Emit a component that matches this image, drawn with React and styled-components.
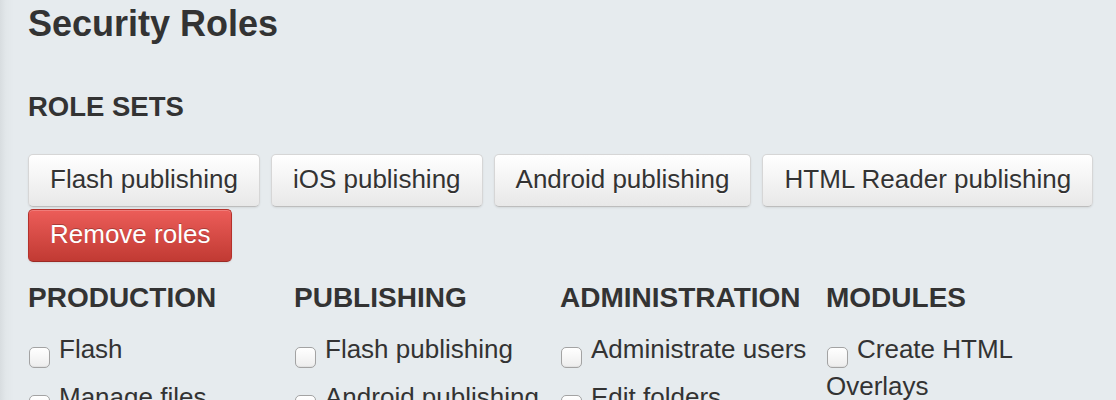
import React from 'react'
import styled, { createGlobalStyle } from 'styled-components'

const GlobalStyle = createGlobalStyle`
	html, body {
		margin: 0;
		padding: 0;
	}
	body {
		background: linear-gradient(to right, #d8dde0 0, #e2e7ea 6px, #e6ebee 14px, #e6ebee 100%);
		color: #333;
		font-family: 'Liberation Sans', Arial, Helvetica, sans-serif;
		min-height: 400px;
	}
`

const Page = styled.div`
	padding: 4px 4px 40px 28px;
`

const Title = styled.h1`
	margin: 0;
	font-size: 36px;
	line-height: 40px;
	font-weight: bold;
	color: #333;
`

const SectionTitle = styled.h3`
	margin: 48px 0 0;
	font-size: 27.5px;
	line-height: 30px;
	font-weight: bold;
	text-transform: uppercase;
`

const ButtonBar = styled.div`
	display: flex;
	flex-wrap: wrap;
	column-gap: 11px;
	row-gap: 2px;
	margin-top: 32px;
	max-width: 1070px;
`

const Button = styled.button`
	font-family: inherit;
	font-size: 26px;
	line-height: 35px;
	padding: 7px 21px 9px;
	border-radius: 5px;
	cursor: pointer;
	color: ${props => props.danger ? '#fff' : '#333'};
	text-shadow: ${props => props.danger ? '0 -1px 0 rgba(0,0,0,.25)' : '0 1px 0 rgba(255,255,255,.75)'};
	background: ${props => props.danger
		? 'linear-gradient(#ec5d59, #c13a33)'
		: 'linear-gradient(#ffffff, #e8e8e8)'};
	border: 1px solid ${props => props.danger ? '#b4312b' : '#d6d6d6'};
	border-bottom-color: ${props => props.danger ? '#9c2a25' : '#bdbdbd'};
	box-shadow: inset 0 1px 0 rgba(255,255,255,.2), 0 1px 2px rgba(0,0,0,.08);
`

const Columns = styled.div`
	display: grid;
	grid-template-columns: repeat(4, 266px);
	margin-top: 21px;
`

const Column = styled.div`
	& h4 {
		margin: 0 0 18px;
		font-size: 28px;
		line-height: 30px;
		font-weight: bold;
		white-space: nowrap;
	}
`

const Item = styled.label`
	display: block;
	font-size: 26px;
	line-height: 36px;
	margin-bottom: 11px;
	padding-right: 12px;
`

const Check = styled.input.attrs({ type: 'checkbox' })`
	appearance: none;
	-webkit-appearance: none;
	display: inline-block;
	width: 21px;
	height: 21px;
	margin: 0 9px 0 1px;
	vertical-align: -10px;
	border: 1px solid #a3a3a3;
	border-radius: 5px;
	background: linear-gradient(#ffffff, #ededed);
	box-shadow: inset 0 -1px 1px rgba(0,0,0,.05);
`

const roleSets = ['Flash publishing', 'iOS publishing', 'Android publishing', 'HTML Reader publishing']

const groups = [
	{ name: 'Production', roles: ['Flash', 'Manage files'] },
	{ name: 'Publishing', roles: ['Flash publishing', 'Android publishing'] },
	{ name: 'Administration', roles: ['Administrate users', 'Edit folders'] },
	{ name: 'Modules', roles: ['Create HTML Overlays'] },
]

const App = () => (
	<Page>
		<GlobalStyle />
		<Title>Security Roles</Title>
		<SectionTitle>Role sets</SectionTitle>
		<ButtonBar>
			{roleSets.map(set => <Button key={set}>{set}</Button>)}
			<Button danger>Remove roles</Button>
		</ButtonBar>
		<Columns>
			{groups.map(group => (
				<Column key={group.name}>
					<h4>{group.name.toUpperCase()}</h4>
					{group.roles.map(role => (
						<Item key={role}>
							<Check />{role}
						</Item>
					))}
				</Column>
			))}
		</Columns>
	</Page>
)

export default App
